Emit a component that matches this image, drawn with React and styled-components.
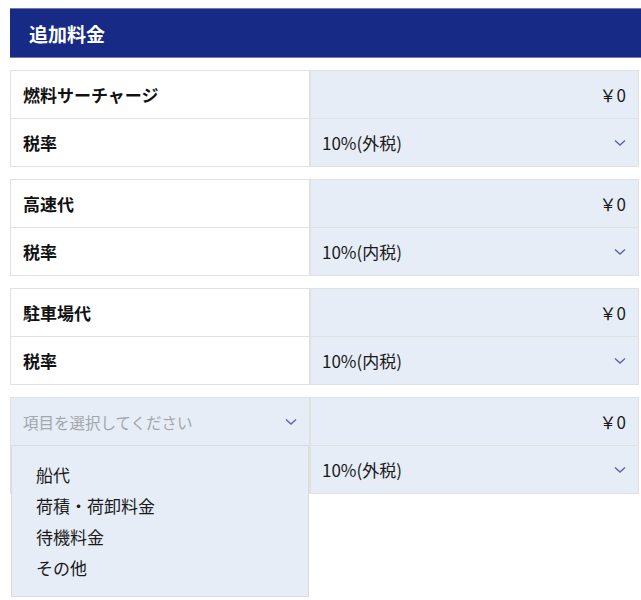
import React from "react";
import styled, { createGlobalStyle } from "styled-components";

const GlobalStyle = createGlobalStyle`
    body {
        margin: 0;
        background: #fff;
        font-family: "Noto Sans CJK JP", "Noto Sans", sans-serif;
        color: #1a1a1a;
    }
`;

const Page = styled.div`
    width: 641px;
    height: 600px;
    overflow: hidden;
    box-sizing: border-box;
    padding: 8px 0 0 10px;
`;

const Title = styled.h2`
    margin: 0 0 12px;
    width: 660px;
    height: 50px;
    box-sizing: border-box;
    background: #172a86;
    border-top: 1px solid #6f7ab0;
    border-bottom: 1px solid #6f7ab0;
    color: #fff;
    font-size: 19px;
    font-weight: 700;
    display: flex;
    align-items: center;
    padding-left: 19px;
`;

const Group = styled.div`
    width: 627px;
    display: grid;
    grid-template-columns: 300px 1fr;
    border: 1px solid #e1e1e1;
    margin-bottom: 12px;
    position: relative;
    &::after {
        content: "";
        position: absolute;
        top: 0;
        bottom: 0;
        right: -4px;
        width: 1px;
        background: #e4e4e4;
    }
`;

const Cell = styled.div`
    box-sizing: border-box;
    display: flex;
    align-items: center;
    position: relative;
    background: ${p => (p.$shaded ? "#e6edf7" : "#fff")};
    border-right: ${p => (p.$left ? "2px solid #e1e1e1" : "none")};
    border-top: ${p => (p.$second ? "1px solid #e1e1e1" : "none")};
    height: ${p => (p.$second ? "48px" : "47px")};
    padding: 0 12px 0 ${p => (p.$left ? "12px" : "11px")};
    justify-content: ${p => (p.$end ? "flex-end" : "space-between")};
`;

const Label = styled.span`
    font-size: 17px;
    font-weight: 700;
    color: #111;
`;

const Value = styled.span`
    font-size: 17px;
    color: #1a1a1a;
`;

const Placeholder = styled.span`
    font-size: 15.5px;
    color: #a3a6ab;
`;

const Menu = styled.ul`
    position: absolute;
    top: 100%;
    left: 0;
    width: 298px;
    box-sizing: border-box;
    margin: 0;
    padding: 13px 0;
    list-style: none;
    background: #e6edf7;
    border: 1px solid #d9dbe0;
    z-index: 2;
`;

const MenuItem = styled.li`
    font-size: 17px;
    line-height: 31px;
    padding-left: 24px;
    color: #1a1a1a;
`;

function Chevron() {
    return (
        <svg width="12" height="8" viewBox="0 0 12 8" fill="none">
            <polyline points="1,1.5 6,6 11,1.5" stroke="#5b65a3" strokeWidth="1.4" />
        </svg>
    );
}

const fees = [
    { name: "燃料サーチャージ", tax: "10%(外税)" },
    { name: "高速代", tax: "10%(内税)" },
    { name: "駐車場代", tax: "10%(内税)" },
];

export default function App() {
    return (
        <Page>
            <GlobalStyle />
            <Title>追加料金</Title>
            {fees.map(f => (
                <Group key={f.name}>
                    <Cell $left><Label>{f.name}</Label></Cell>
                    <Cell $shaded $end><Value>￥0</Value></Cell>
                    <Cell $left $second><Label>税率</Label></Cell>
                    <Cell $shaded $second><Value>{f.tax}</Value><Chevron /></Cell>
                </Group>
            ))}
            <Group>
                <Cell $left $shaded>
                    <Placeholder>項目を選択してください</Placeholder>
                    <Chevron />
                    <Menu>
                        <MenuItem>船代</MenuItem>
                        <MenuItem>荷積・荷卸料金</MenuItem>
                        <MenuItem>待機料金</MenuItem>
                        <MenuItem>その他</MenuItem>
                    </Menu>
                </Cell>
                <Cell $shaded $end><Value>￥0</Value></Cell>
                <Cell $left $second $shaded></Cell>
                <Cell $shaded $second><Value>10%(外税)</Value><Chevron /></Cell>
            </Group>
        </Page>
    );
}
